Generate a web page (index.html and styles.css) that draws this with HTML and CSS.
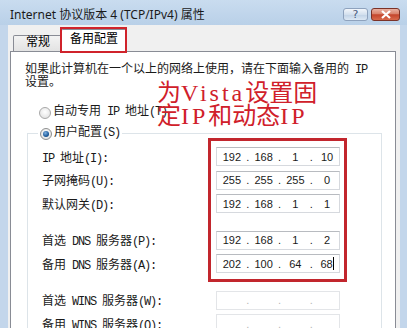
FILE: index.html
```html
<!DOCTYPE html>
<html lang="zh">
<head>
<meta charset="utf-8">
<link rel="stylesheet" href="styles.css">
</head>
<body>
<div class="window">
  <div class="titlebar">
    <span class="title">Internet 协议版本 4 (TCP/IPv4) 属性</span>
    <div class="caption-btns">
      <span class="cbtn help">?</span>
      <span class="cbtn close"><svg width="12" height="9" viewBox="0 0 12 9"><path d="M2 1 L10 8 M10 1 L2 8" stroke="#fff" stroke-width="2.2" fill="none"/></svg></span>
    </div>
  </div>
  <div class="client">
    <div class="tabs">
      <div class="tab">常规</div>
      <div class="tab active">备用配置</div>
    </div>
    <div class="panel">
      <p class="intro">如果此计算机在一个以上的网络上使用，请在下面输入备用的<span class="en"> IP</span><br>设置。</p>
      <div class="radio-row"><span class="radio"></span><span>自动专用<span class="en"> IP </span>地址<span class="en">(T)</span></span></div>
      <fieldset class="group">
        <legend class="radio-row"><span class="radio checked"></span><span>用户配置<span class="en">(S)</span></span></legend>
        <div class="rows">
          <div class="row"><span class="label"><span class="en">IP </span>地址<span class="en">(I):</span></span><div class="ip"><span class="seg">192</span><span class="dot">.</span><span class="seg">168</span><span class="dot">.</span><span class="seg">1</span><span class="dot">.</span><span class="seg">10</span></div></div>
          <div class="row"><span class="label">子网掩码<span class="en">(U):</span></span><div class="ip"><span class="seg">255</span><span class="dot">.</span><span class="seg">255</span><span class="dot">.</span><span class="seg">255</span><span class="dot">.</span><span class="seg">0</span></div></div>
          <div class="row"><span class="label">默认网关<span class="en">(D):</span></span><div class="ip"><span class="seg">192</span><span class="dot">.</span><span class="seg">168</span><span class="dot">.</span><span class="seg">1</span><span class="dot">.</span><span class="seg">1</span></div></div>
          <div class="row group-start"><span class="label">首选<span class="en"> DNS </span>服务器<span class="en">(P):</span></span><div class="ip"><span class="seg">192</span><span class="dot">.</span><span class="seg">168</span><span class="dot">.</span><span class="seg">1</span><span class="dot">.</span><span class="seg">2</span></div></div>
          <div class="row"><span class="label">备用<span class="en"> DNS </span>服务器<span class="en">(A):</span></span><div class="ip"><span class="seg">202</span><span class="dot">.</span><span class="seg">100</span><span class="dot">.</span><span class="seg">64</span><span class="dot">.</span><span class="seg caret">68</span></div></div>
          <div class="row group-start"><span class="label">首选<span class="en"> WINS </span>服务器<span class="en">(W):</span></span><div class="ip empty"><span class="seg"></span><span class="dot">.</span><span class="seg"></span><span class="dot">.</span><span class="seg"></span><span class="dot">.</span><span class="seg"></span></div></div>
          <div class="row"><span class="label">备用<span class="en"> WINS </span>服务器<span class="en">(Q):</span></span><div class="ip empty"><span class="seg"></span><span class="dot">.</span><span class="seg"></span><span class="dot">.</span><span class="seg"></span><span class="dot">.</span><span class="seg"></span></div></div>
        </div>
      </fieldset>
      <div class="note">为<span class="lat">Vista</span>设置固<br>定<span class="lat">IP</span>和动态<span class="lat">IP</span></div>
      <div class="redbox"></div>
    </div>
  </div>
  <div class="tabmark"></div>
</div>
</body>
</html>
```
FILE: styles.css
```css
html, body {
  margin: 0;
  padding: 0;
}
body {
  width: 407px;
  height: 328px;
  overflow: hidden;
  background: #c3d6eb;
  font-family: "Liberation Mono", "Noto Sans CJK SC", monospace;
  font-size: 12px;
  color: #1a1a1a;
}
.en {
  letter-spacing: -1.2px;
}
.window {
  position: relative;
  height: 328px;
  display: flex;
  flex-direction: column;
}
.titlebar {
  height: 25px;
  flex: none;
  display: flex;
  align-items: flex-start;
  padding-left: 10px;
  background: linear-gradient(#c9dcef, #b9d0e8);
}
.title {
  margin-top: 7px;
  font-family: "Noto Sans", "Noto Sans CJK SC", sans-serif;
  font-size: 12px;
  line-height: 15px;
  color: #1a1a1a;
}
.caption-btns {
  margin-left: auto;
  margin-right: 7px;
  margin-top: 8px;
  display: flex;
  gap: 3px;
}
.cbtn {
  height: 13px;
  border-radius: 3px;
  display: flex;
  align-items: center;
  justify-content: center;
  box-sizing: border-box;
}
.help {
  width: 25px;
  border: 1px solid #8ea2bd;
  background: linear-gradient(#f2f6fb, #d3e0ee 50%, #c0d2e6 51%, #dce8f4);
  font-family: "DejaVu Sans", sans-serif;
  font-size: 11px;
  color: #4a5d7e;
  line-height: 11px;
}
.close {
  width: 29px;
  border: 1px solid #7b3227;
  background: linear-gradient(#eab2a3, #d9826b 45%, #c4452c 52%, #d86a4c);
}
.client {
  flex: 1;
  display: flex;
  flex-direction: column;
  margin: 0 7px 0 8px;
  background: #f0f0f0;
  min-height: 0;
}
.tabs {
  height: 26px;
  flex: none;
  display: flex;
  align-items: flex-end;
  padding-left: 5px;
  position: relative;
  z-index: 1;
}
.tab {
  box-sizing: border-box;
  height: 16px;
  padding: 0 11px 0 12px;
  border: 1px solid #898c95;
  border-bottom: none;
  border-radius: 2px 2px 0 0;
  background: linear-gradient(#f3f3f3, #e3e3e3);
  font-size: 12px;
  line-height: 15px;
  color: #000;
}
.tab.active {
  height: 23px;
  margin-bottom: -1px;
  margin-left: -1px;
  padding: 3px 8px 0;
  background: #fff;
  border-left: 1px solid #898c95;
}
.panel {
  position: relative;
  flex: 1;
  margin: 0 4px 0 2px;
  border: 1px solid #898c95;
  border-bottom: none;
  background: #fff;
}
.intro {
  margin: 12px 0 0 14px;
  line-height: 13px;
  white-space: nowrap;
}
.radio-row {
  display: flex;
  align-items: center;
  gap: 2px;
  line-height: 13px;
  white-space: nowrap;
}
.panel > .radio-row {
  margin: 16px 0 0 28px;
}
.radio {
  width: 12px;
  height: 12px;
  box-sizing: border-box;
  border-radius: 50%;
  border: 1px solid #a8a8a8;
  background: radial-gradient(circle at 50% 40%, #ffffff, #e6e6e6 70%, #d4d4d4);
  position: relative;
  flex: none;
}
.radio.checked {
  border-color: #8e8f8f;
}
.radio.checked::after {
  content: "";
  position: absolute;
  left: 2px;
  top: 2px;
  width: 6px;
  height: 6px;
  border-radius: 50%;
  background: radial-gradient(circle at 40% 35%, #7fb0e0, #1d5a99 60%, #123e70);
}
.group {
  margin: 8px 13px 0 16px;
  padding: 7px 0 20px 14px;
  border: 1px solid #dde4e9;
  min-width: 0;
}
.group legend {
  margin-left: -4px;
  padding: 0 2px;
}
.rows {
  display: flex;
  flex-direction: column;
  gap: 4.5px;
}
.row {
  display: flex;
  align-items: center;
  height: 19px;
}
.row.group-start {
  margin-top: 13px;
}
.label {
  width: 174px;
  flex: none;
  white-space: nowrap;
}
.ip {
  width: 124px;
  height: 19px;
  box-sizing: border-box;
  border: 1px solid #d6d9de;
  border-top-color: #b8bbc0;
  background: #fff;
  display: flex;
  align-items: center;
  padding-left: 3px;
  font-family: "Liberation Sans", sans-serif;
  font-size: 11px;
  color: #1a1a1a;
}
.seg {
  width: 24px;
  text-align: center;
}
.dot {
  width: 8px;
  text-align: center;
}
.ip.empty {
  border-color: #e3e5e8;
  color: #b8b8b8;
}
.caret::after {
  content: "";
  display: inline-block;
  width: 1px;
  height: 13px;
  background: #000;
  vertical-align: -2px;
}
.note {
  position: absolute;
  left: 146px;
  top: 30px;
  font-family: "Liberation Serif", "Noto Sans CJK SC", serif;
  font-size: 24px;
  font-weight: 400;
  line-height: 23px;
  color: #d0202a;
  white-space: nowrap;
}
.note .lat {
  letter-spacing: 3px;
}
.redbox {
  position: absolute;
  left: 197px;
  top: 86px;
  width: 139px;
  height: 144px;
  box-sizing: border-box;
  border: 3px solid #c2262d;
}
.tabmark {
  position: absolute;
  left: 60px;
  top: 27px;
  width: 67px;
  height: 26px;
  box-sizing: border-box;
  border: 2px solid #d0232b;
  z-index: 2;
}
```
